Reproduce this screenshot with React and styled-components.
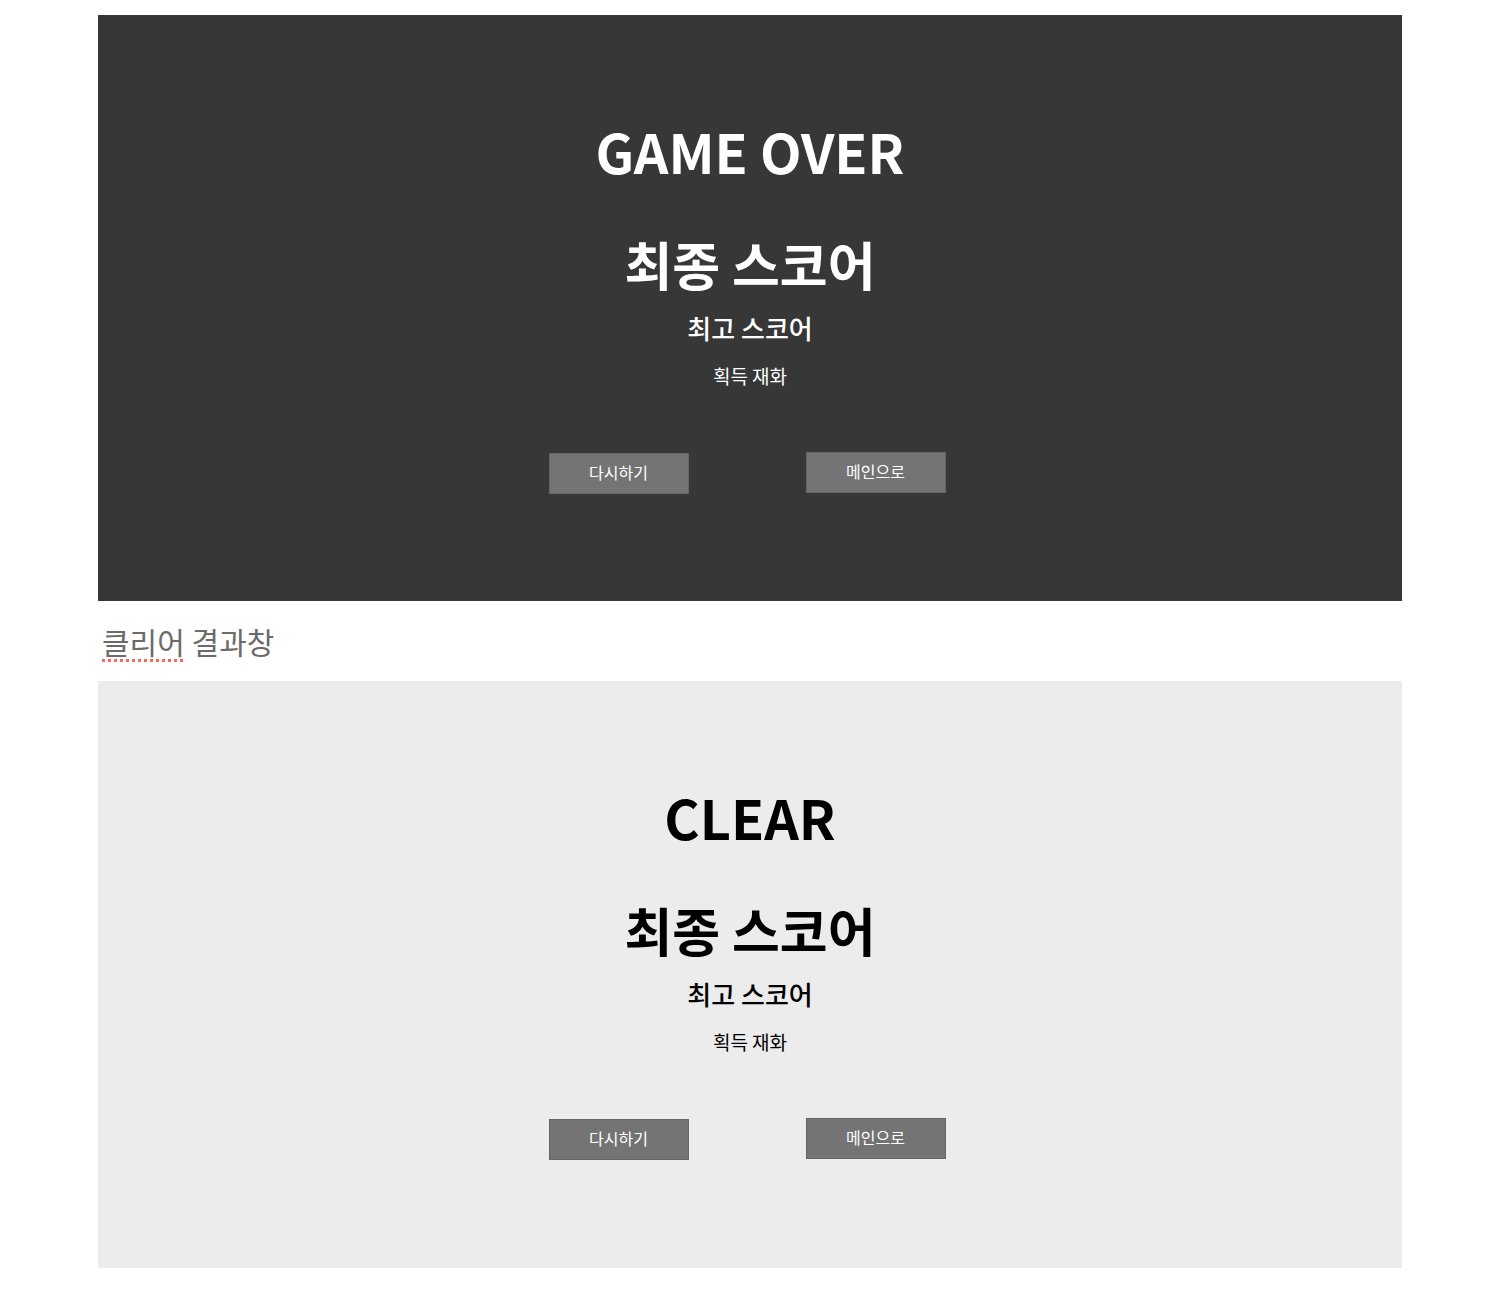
import React from 'react'
import styled, { createGlobalStyle } from 'styled-components';

const GlobalStyle = createGlobalStyle`
    body {
        margin: 0;
        background: #ffffff;
        font-family: "Noto Sans CJK KR", "Noto Sans", sans-serif;
    }
`;
const Page = styled.div`
    width: 1304px;
    padding: 15px 0 0 98px;
`;
const ResultPanel = styled.section`
    display: flex;
    flex-direction: column;
    align-items: center;
    height: ${props => props.dark ? '586px' : '587px'};
    padding-top: 101px;
    box-sizing: border-box;
    background: ${props => props.dark ? '#373737' : '#ececec'};
    color: ${props => props.dark ? '#ffffff' : '#000000'};
`;
const Title = styled.h1`
    margin: 0;
    font-size: 54px;
    line-height: 70px;
    font-weight: 700;
`;
const FinalScore = styled.h2`
    margin: 46px 0 0;
    font-size: 52px;
    line-height: 64px;
    font-weight: 700;
`;
const BestScore = styled.div`
    margin-top: 15px;
    font-size: 26px;
    line-height: 34px;
    font-weight: 500;
`;
const Currency = styled.div`
    margin-top: 20px;
    font-size: 19px;
    line-height: 22px;
    font-weight: 400;
`;
const ButtonRow = styled.div`
    display: flex;
    align-items: flex-start;
    gap: 117px;
    margin: 66px 6px 0 0;
`;
const ActionButton = styled.button`
    width: 140px;
    height: 41px;
    margin-top: ${props => props.raised ? '-1px' : '0'};
    border: 1px solid #666666;
    background: #747474;
    color: #ffffff;
    font-family: "Noto Sans CJK KR", "Noto Sans", sans-serif;
    font-size: 16px;
    font-weight: 400;
    padding: 0 0 3px;
`;
const SectionLabel = styled.div`
    height: 80px;
    line-height: 80px;
    padding-left: 4px;
    font-size: 30px;
    color: #6b6b6b;
`;
const Misspelled = styled.span`
    text-decoration: underline dotted #f06a5e;
    text-decoration-thickness: 3px;
    text-underline-offset: 5px;
`;

const Result = ({ title, dark }) => {
    return (
        <ResultPanel dark={dark}>
            <Title>{title}</Title>
            <FinalScore>최종 스코어</FinalScore>
            <BestScore>최고 스코어</BestScore>
            <Currency>획득 재화</Currency>
            <ButtonRow>
                <ActionButton>다시하기</ActionButton>
                <ActionButton raised>메인으로</ActionButton>
            </ButtonRow>
        </ResultPanel>
    )
}

const App = () => {
    return (
        <Page>
            <GlobalStyle />
            <Result title="GAME OVER" dark />
            <SectionLabel><Misspelled>클리어</Misspelled> 결과창</SectionLabel>
            <Result title="CLEAR" />
        </Page>
    )
}
export default App;
